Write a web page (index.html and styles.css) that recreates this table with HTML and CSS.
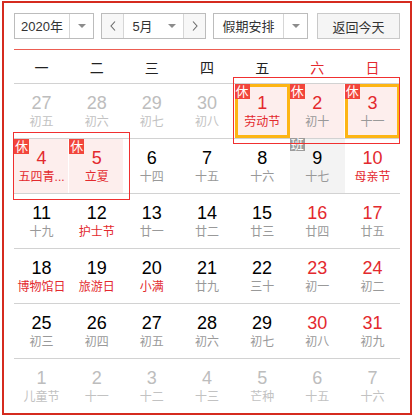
FILE: index.html
```html
<!DOCTYPE html>
<html lang="zh">
<head>
<meta charset="utf-8">
<title>万年历</title>
<link rel="stylesheet" href="styles.css">
</head>
<body>
<div class="calendar">
  <div class="toolbar">
    <div class="select year">
      <span class="select-text">2020年</span>
      <span class="select-arrow"><i class="caret"></i></span>
    </div>
    <div class="month-picker">
      <button class="nav prev" type="button"><svg width="6" height="10" viewBox="0 0 6 10"><polyline points="5,0.5 1,5 5,9.5" fill="none" stroke="#6a6a6a" stroke-width="1.1"/></svg></button>
      <div class="month-mid">
        <span class="select-text">5月</span>
        <span class="month-arrow"><i class="caret"></i></span>
      </div>
      <button class="nav next" type="button"><svg width="6" height="10" viewBox="0 0 6 10"><polyline points="1,0.5 5,5 1,9.5" fill="none" stroke="#6a6a6a" stroke-width="1.1"/></svg></button>
    </div>
    <div class="select holiday">
      <span class="select-text">假期安排</span>
      <span class="select-arrow"><i class="caret"></i></span>
    </div>
    <button class="today-btn" type="button">返回今天</button>
  </div>

  <div class="weekdays">
    <span>一</span><span>二</span><span>三</span><span>四</span><span>五</span><span class="wkend">六</span><span class="wkend">日</span>
  </div>

  <div class="weeks">
    <div class="week">
      <div class="day other"><span class="num">27</span><span class="lunar">初五</span></div>
      <div class="day other"><span class="num">28</span><span class="lunar">初六</span></div>
      <div class="day other"><span class="num">29</span><span class="lunar">初七</span></div>
      <div class="day other"><span class="num">30</span><span class="lunar">初八</span></div>
      <div class="day rest sel"><i class="tag">休</i><span class="num red">1</span><span class="lunar fest">劳动节</span></div>
      <div class="day rest"><i class="tag">休</i><span class="num red">2</span><span class="lunar">初十</span></div>
      <div class="day rest sel"><i class="tag">休</i><span class="num red">3</span><span class="lunar">十一</span></div>
    </div>
    <div class="week">
      <div class="day rest"><i class="tag">休</i><span class="num red">4</span><span class="lunar fest" title="五四青年节">五四青...</span></div>
      <div class="day rest"><i class="tag">休</i><span class="num red">5</span><span class="lunar fest">立夏</span></div>
      <div class="day"><span class="num">6</span><span class="lunar">十四</span></div>
      <div class="day"><span class="num">7</span><span class="lunar">十五</span></div>
      <div class="day"><span class="num">8</span><span class="lunar">十六</span></div>
      <div class="day work"><i class="tag tag-work">班</i><span class="num">9</span><span class="lunar">十七</span></div>
      <div class="day"><span class="num red">10</span><span class="lunar fest">母亲节</span></div>
    </div>
    <div class="week">
      <div class="day"><span class="num">11</span><span class="lunar">十九</span></div>
      <div class="day"><span class="num">12</span><span class="lunar fest">护士节</span></div>
      <div class="day"><span class="num">13</span><span class="lunar">廿一</span></div>
      <div class="day"><span class="num">14</span><span class="lunar">廿二</span></div>
      <div class="day"><span class="num">15</span><span class="lunar">廿三</span></div>
      <div class="day"><span class="num red">16</span><span class="lunar">廿四</span></div>
      <div class="day"><span class="num red">17</span><span class="lunar">廿五</span></div>
    </div>
    <div class="week">
      <div class="day"><span class="num">18</span><span class="lunar fest">博物馆日</span></div>
      <div class="day"><span class="num">19</span><span class="lunar fest">旅游日</span></div>
      <div class="day"><span class="num">20</span><span class="lunar fest">小满</span></div>
      <div class="day"><span class="num">21</span><span class="lunar">廿九</span></div>
      <div class="day"><span class="num">22</span><span class="lunar">三十</span></div>
      <div class="day"><span class="num red">23</span><span class="lunar">初一</span></div>
      <div class="day"><span class="num red">24</span><span class="lunar">初二</span></div>
    </div>
    <div class="week">
      <div class="day"><span class="num">25</span><span class="lunar">初三</span></div>
      <div class="day"><span class="num">26</span><span class="lunar">初四</span></div>
      <div class="day"><span class="num">27</span><span class="lunar">初五</span></div>
      <div class="day"><span class="num">28</span><span class="lunar">初六</span></div>
      <div class="day"><span class="num">29</span><span class="lunar">初七</span></div>
      <div class="day"><span class="num red">30</span><span class="lunar">初八</span></div>
      <div class="day"><span class="num red">31</span><span class="lunar">初九</span></div>
    </div>
    <div class="week last">
      <div class="day other"><span class="num">1</span><span class="lunar">儿童节</span></div>
      <div class="day other"><span class="num">2</span><span class="lunar">十一</span></div>
      <div class="day other"><span class="num">3</span><span class="lunar">十二</span></div>
      <div class="day other"><span class="num">4</span><span class="lunar">十三</span></div>
      <div class="day other"><span class="num">5</span><span class="lunar">芒种</span></div>
      <div class="day other"><span class="num">6</span><span class="lunar">十五</span></div>
      <div class="day other"><span class="num">7</span><span class="lunar">十六</span></div>
    </div>
    <svg class="range range-may-day" width="167" height="67" viewBox="0 0 167 67"><rect x="0.5" y="0.5" width="166" height="66" fill="none" stroke="#f03030" stroke-width="1"/></svg>
    <svg class="range range-youth" width="117" height="68" viewBox="0 0 117 68"><rect x="0.5" y="0.5" width="116" height="67" fill="none" stroke="#f03030" stroke-width="1"/></svg>
  </div>
</div>
</body>
</html>
```

FILE: styles.css
```css
html, body {
  margin: 0;
  padding: 0;
  background: #fff;
}

body {
  font-family: "Liberation Sans", "Noto Sans CJK SC", sans-serif;
  color: #333;
}

.calendar {
  margin: 1px 0 0 2px;
  width: 410px;
  height: 414px;
  box-sizing: border-box;
  border: 2px solid #d52b1f;
  padding: 10px 10px 0;
}

/* toolbar */
.toolbar {
  display: flex;
  height: 26px;
  padding-bottom: 10px;
  border-bottom: 1px solid #ec5d52;
  font-size: 13px;
  color: #333;
}

.select {
  display: flex;
  height: 26px;
  box-sizing: border-box;
  border: 1px solid #bcbcbc;
  background: #fff;
}

.year {
  width: 80px;
}

.holiday {
  width: 95px;
  margin-left: 7px;
}

.select-text {
  flex: 1;
  display: flex;
  align-items: center;
  justify-content: center;
  line-height: 1;
}

.select-arrow {
  width: 24px;
  box-sizing: border-box;
  border-left: 1px solid #d6d6d6;
  display: flex;
  align-items: center;
  justify-content: center;
}

.caret {
  display: block;
  width: 0;
  height: 0;
  border-left: 4px solid transparent;
  border-right: 4px solid transparent;
  border-top: 4px solid #8c8c8c;
}

.month-picker {
  display: flex;
  width: 105px;
  height: 26px;
  box-sizing: border-box;
  margin-left: 7px;
  border: 1px solid #bcbcbc;
  background: #fff;
}

.nav {
  width: 22px;
  box-sizing: border-box;
  padding: 0;
  border: 0;
  background: #f7f7f7;
  display: flex;
  align-items: center;
  justify-content: center;
}

.nav.prev {
  border-right: 1px solid #d6d6d6;
}

.nav.next {
  border-left: 1px solid #d6d6d6;
}

.month-mid {
  flex: 1;
  display: flex;
}

.month-arrow {
  width: 22px;
  display: flex;
  align-items: center;
  justify-content: center;
}

.today-btn {
  width: 83px;
  height: 26px;
  margin-left: 9px;
  padding: 0;
  box-sizing: border-box;
  border: 1px solid #c9c9c9;
  background: #f5f5f5;
  font: inherit;
  font-size: 13px;
  color: #333;
}

/* weekday header */
.weekdays {
  display: grid;
  grid-template-columns: repeat(7, 1fr);
  height: 34px;
  box-sizing: border-box;
  align-items: center;
  text-align: center;
  font-size: 14px;
  color: #222;
  border-bottom: 1px solid #d2d2d2;
}

.weekdays .wkend {
  color: #e3292e;
}

/* grid of days */
.weeks {
  position: relative;
}

.week {
  display: grid;
  grid-template-columns: repeat(7, 1fr);
  height: 55px;
  box-sizing: border-box;
  border-bottom: 1px solid #d2d2d2;
}

.week.last {
  height: 54px;
  border-bottom: 0;
}

.day {
  position: relative;
  text-align: center;
  min-width: 0;
}

.num {
  display: block;
  padding-top: 9px;
  font-size: 18px;
  line-height: 20px;
  color: #000;
}

.lunar {
  display: block;
  padding: 0 2px;
  font-size: 12px;
  line-height: 18px;
  color: #999;
  white-space: nowrap;
}

.num.red,
.lunar.fest {
  color: #e3292e;
}

.other .num {
  color: #bdbdbd;
}

.other .lunar {
  color: #c2c2c2;
}

.day.rest {
  background: #fdeeed;
  box-shadow: inset -1px 0 0 #fff;
}

.day.rest.sel {
  box-shadow: inset 0 0 0 3px #fdb515;
}

.day.work {
  background: #f3f3f3;
}

.tag {
  position: absolute;
  top: 0;
  left: 0;
  width: 15px;
  height: 15px;
  font-style: normal;
  font-size: 13px;
  line-height: 15px;
  text-align: center;
  color: #fff;
  background: #f2453b;
}

.tag.tag-work {
  top: -1px;
  height: 13px;
  line-height: 13px;
  background: #9c9c9c;
}

/* holiday range outlines */
.range {
  position: absolute;
  z-index: 2;
  display: block;
  pointer-events: none;
}

.range-may-day {
  left: 219px;
  top: -7px;
}

.range-youth {
  left: -1px;
  top: 48px;
}
```
